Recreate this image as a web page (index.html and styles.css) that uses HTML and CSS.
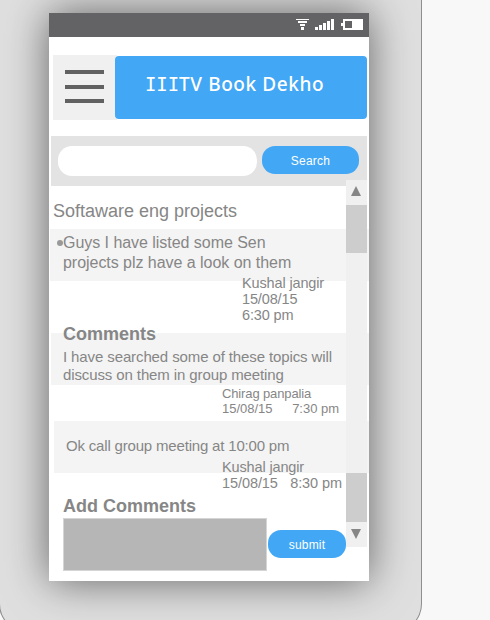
FILE: index.html
```html
<!DOCTYPE html>
<html lang="en">
<head>
<meta charset="utf-8">
<title>IIITV Book Dekho</title>
<link rel="stylesheet" href="styles.css">
</head>
<body>
<div class="device">
<main class="screen">
  <div class="status">
    <svg width="68" height="12" viewBox="0 0 68 12" fill="#fff" shape-rendering="crispEdges">
      <path d="M0 0h13v1H0zM2 2h9v2H2zM4 5h5v2H4zM5 8h3v3H5zM19 8h3v3h-3zM23 6h3v5h-3zM27 4h3v7h-3zM31 2h3v9h-3zM35 0h3v11h-3z"/>
      <path fill-rule="evenodd" d="M47 0h20v11H47V7h-2V4h2zM49 2v7h7V2z"/>
    </svg>
  </div>
  <header class="header">
    <button class="menu" aria-label="Menu"><i></i><i></i><i></i></button>
    <h1 class="title"><span class="serifed">III</span><span class="word">TV Book Dekho</span></h1>
  </header>
  <form class="search">
    <input class="query" type="text" aria-label="Search projects">
    <button class="button find" type="button">Search</button>
  </form>
  <div class="body">
    <section class="thread">
      <h2 class="topic">Softaware eng projects</h2>
      <div class="post first"><i class="dot"></i><p>Guys I have listed some Sen<br>projects plz have a look on them</p></div>
      <p class="byline author">Kushal jangir<br>15/08/15<br>6:30 pm</p>
      <div class="post second"><h3>Comments</h3><p>I have searched some of these topics will<br>discuss on them in group meeting</p></div>
      <p class="byline reply">Chirag panpalia<br><span class="when"><span>15/08/15</span><span>7:30 pm</span></span></p>
      <div class="post third"><p>Ok call group meeting at 10:00 pm</p></div>
      <p class="byline last">Kushal jangir<br><span class="when"><span>15/08/15</span><span>8:30 pm</span></span></p>
      <h3 class="add">Add Comments</h3>
      <div class="compose">
        <textarea class="comment" aria-label="Comment"></textarea>
        <button class="button submit" type="button">submit</button>
      </div>
    </section>
    <div class="scrollbar">
      <div class="arrow"><svg width="10" height="10"><path d="M5 0L10 10H0z"/></svg></div>
      <div class="thumb upper"></div>
      <div class="track"></div>
      <div class="thumb lower"></div>
      <div class="arrow down"><svg width="10" height="10"><path d="M0 0H10L5 10z"/></svg></div>
    </div>
  </div>
</main>
</div>
</body>
</html>
```

FILE: styles.css
```css
* { box-sizing: border-box; margin: 0; padding: 0; }
body { width: 490px; height: 620px; overflow: hidden; background: #f8f8f8; color: #868686; font-family: "Liberation Sans", sans-serif; }
button { border: 0; font-family: inherit; }
.device { width: 423px; height: 632px; margin-left: -1px; padding: 13px 0 0 49px; background: #dfdfdf; border: solid #8f8f8f; border-width: 0 1px 1px; border-radius: 0 0 28px 28px; overflow: hidden; }
.screen { width: 320px; height: 568px; background: #fff; box-shadow: 0 0 40px rgba(0,0,0,.56); }
.status { height: 24px; background: #636365; display: flex; justify-content: flex-end; padding: 6px 5px 0 0; }
.header { display: flex; align-items: center; margin: 18px 2px 0 4px; height: 65px; }
.menu { width: 64px; height: 65px; flex: none; margin-right: -2px; background: #f0f0f0; display: flex; flex-direction: column; align-items: flex-start; gap: 11px; padding: 15px 0 0 12px; }
.menu i { display: block; width: 39px; height: 4px; background: #616161; }
.menu i:last-child { margin-top: -1px; }
.title { flex: 1; height: 63px; background: #42a7f5; color: #fff; border-radius: 4px; padding: 15px 0 0 30px; font: 400 19px/26px "DejaVu Sans Mono", monospace; white-space: nowrap; }
.serifed { letter-spacing: -.1px; }
.word { font-family: "Noto Sans", sans-serif; font-weight: 500; font-size: 19px; letter-spacing: .6px; }
.search { margin: 16px 2px 0; height: 50px; background: #e3e3e3; display: flex; align-items: flex-start; gap: 5px; padding: 10px 8px 0 7px; }
.query { width: 199px; height: 30px; border: 0; border-radius: 14px; background: #fff; }
.button { background: #42a7f5; color: #fff; height: 28px; border-radius: 13px; font-size: 12px; }
.find { width: 97px; letter-spacing: .25px; padding-top: 2px; }
.body { display: flex; height: 395px; }
.thread { width: 297px; flex: none; }
.topic { font-size: 18px; font-weight: 400; line-height: 22px; padding: 14px 0 0 4px; height: 43px; white-space: nowrap; }
.post { height: 52px; background: #f4f4f4; white-space: nowrap; width: 320px; }
.first { margin-left: 1px; width: 319px; display: flex; font-size: 16px; line-height: 20px; letter-spacing: -.04px; padding: 4px 0 0 7px; }
.dot { width: 6px; height: 6px; border-radius: 50%; background: #999; margin-top: 7px; }
.byline { white-space: nowrap; }
.author { margin: -6px 0 0 193px; height: 58px; font-size: 14.5px; line-height: 16px; letter-spacing: -.14px; }
.second { display: flow-root; margin-left: 2px; width: 318px; padding-left: 12px; font-size: 15px; line-height: 18px; letter-spacing: -.11px; }
h3 { font-size: 18px; line-height: 22px; font-weight: 700; letter-spacing: 0; }
.second h3 { margin-top: -10px; padding-bottom: 3px; height: 25px; }
.reply { padding: 1px 0 0 173px; height: 36px; font-size: 13px; line-height: 15px; letter-spacing: -.13px; }
.when { display: flex; justify-content: space-between; width: 117px; letter-spacing: -.02px; }
.third { margin-left: 5px; width: 315px; padding: 16px 0 0 12px; font-size: 15px; line-height: 18px; letter-spacing: -.18px; }
.last { margin: -14px 0 0 173px; height: 36px; font-size: 14.5px; line-height: 16px; letter-spacing: -.14px; }
.last .when { width: 120px; letter-spacing: -.08px; }
.add { padding-left: 14px; height: 23px; }
.compose { display: flex; padding-left: 14px; gap: 1px; }
.comment { display: block; flex: none; width: 204px; height: 53px; background: #b6b6b6; border: 1px solid #d5d5d5; resize: none; }
.submit { width: 78px; flex: none; margin-top: 12px; height: 28px; letter-spacing: .2px; padding-top: 2px; }
.scrollbar { width: 21px; flex: none; height: 367px; margin-top: -6px; background: #f0f0f0; display: flex; flex-direction: column; position: relative; }
.arrow { height: 25px; padding: 6px 0 0 5px; }
.arrow svg { display: block; fill: #868686; }
.down { padding-top: 7px; }
.thumb { background: #cdcdcd; }
.upper { height: 48px; }
.track { flex: 1; }
.lower { height: 49px; }
```
